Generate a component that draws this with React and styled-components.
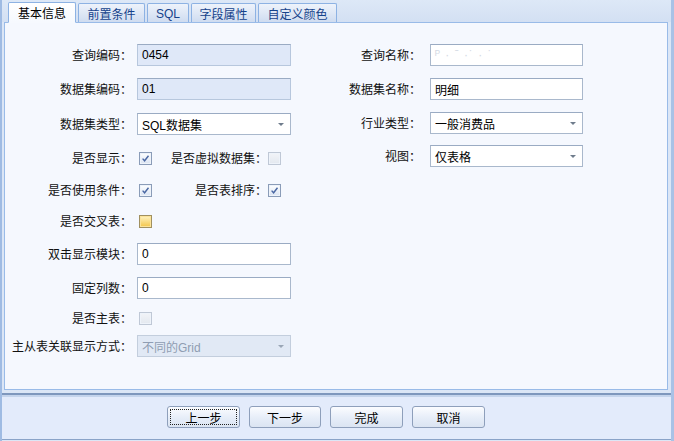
import React from 'react';
import styled, { createGlobalStyle } from 'styled-components';

const Global = createGlobalStyle`
  html, body { margin: 0; padding: 0; background: #ffffff; }
  body { font-family: "Liberation Sans", "Noto Sans CJK SC", sans-serif; font-size: 12px; color: #000; }
  * { box-sizing: border-box; }
`;

const Frame = styled.div`
  width: 674px;
  height: 441px;
  background: #dbe6f6;
  border-left: 2px solid #9fbbe3;
  border-right: 3px solid #a9c2e6;
  display: flex;
  flex-direction: column;
`;

const TabStrip = styled.div`
  height: 22px;
  display: flex;
  align-items: flex-end;
  gap: 2px;
  padding-left: 6px;
  background: linear-gradient(#dde8f7, #d3e0f3);
`;

const Tab = styled.div`
  height: ${p => (p.$active ? '21px' : '19px')};
  width: ${p => p.$w}px;
  border: 1px solid #8db2e3;
  border-bottom: ${p => (p.$active ? '1px solid #f6f9fe' : '0')};
  border-radius: 2px 2px 0 0;
  margin-bottom: ${p => (p.$active ? '-1px' : '0')};
  position: relative;
  z-index: ${p => (p.$active ? 2 : 1)};
  background: ${p => (p.$active ? 'linear-gradient(#ffffff, #f6f9fe)' : 'linear-gradient(#eef3fb, #cfdcf0)')};
  color: ${p => (p.$active ? '#000' : '#15428b')};
  font-family: "Liberation Sans", "Noto Sans CJK SC", sans-serif;
  font-size: 12px;
  display: flex;
  align-items: center;
  justify-content: center;
  padding-top: ${p => (p.$active ? '0' : '1px')};
`;

const Body = styled.div`
  height: 368px;
  margin: 0 3px 0 2px;
  border: 1px solid #99bbe8;
  background: #f5f8fe;
  display: flex;
  padding-top: 21px;
  position: relative;
  z-index: 1;
`;

const Column = styled.div`
  width: ${p => p.$w}px;
  display: flex;
  flex-direction: column;
`;

const Row = styled.div`
  height: 22px;
  margin-top: ${p => p.$mt || 0}px;
  display: flex;
  align-items: center;
`;

const Label = styled.div`
  width: ${p => p.$w}px;
  text-align: right;
  white-space: nowrap;
  font-family: "Noto Sans CJK SC", sans-serif;
  font-size: 12px;
  color: #111;
  margin-right: ${p => p.$gap}px;
  line-height: 22px;
`;

const TextBox = styled.div`
  width: ${p => p.$w}px;
  height: ${p => p.$h || 22}px;
  border: 1px solid ${p => (p.$disabled ? '#c3cedd' : p.$readonly ? '#b7c7dd' : '#a9b8cc')};
  border-top-color: ${p => (p.$disabled ? '#c3cedd' : '#9aabc3')};
  background: ${p => (p.$disabled ? '#e1e9f5' : p.$readonly ? '#dfe8f8' : '#ffffff')};
  color: ${p => (p.$disabled ? '#8f9db2' : '#000')};
  font-family: "Liberation Sans", "Noto Sans CJK SC", sans-serif;
  font-size: 12px;
  padding-left: 4px;
  display: flex;
  align-items: center;
  position: relative;
  white-space: nowrap;
`;

const Arrow = styled.span`
  position: absolute;
  right: 6px;
  top: 9px;
  width: 0;
  height: 0;
  border-left: 3px solid transparent;
  border-right: 3px solid transparent;
  border-top: 3px solid ${p => (p.$disabled ? '#9aa6b6' : '#6f7c8c')};
`;

const Box = styled.span`
  width: 13px;
  height: 13px;
  margin-left: ${p => p.$ml || 0}px;
  border: 1px solid ${p => (p.$disabled ? '#bfc8d6' : p.$focus ? '#a09060' : '#8a9cb8')};
  background: ${p =>
    p.$disabled
      ? 'linear-gradient(#f2f4f8, #e3e8ef)'
      : p.$focus
      ? 'linear-gradient(#fff4c4, #f3c548)'
      : 'linear-gradient(#ffffff, #d9e3f2)'};
  display: inline-flex;
  align-items: center;
  justify-content: center;
  box-shadow: inset 0 0 0 1px ${p => (p.$focus ? '#fbe39a' : '#eef3fa')};
`;

const Faint = styled.span`
  color: #d4dae4;
  letter-spacing: 1px;
`;

const Separator = styled.div`
  height: 4px;
  margin: 3px 0 0 0;
  border-top: 2px solid #7e97bd;
  background: #c4d4ec;
`;

const ButtonBar = styled.div`
  height: 43px;
  background: #e3ebfb;
  border-bottom: 1px solid #8aa3c8;
  display: flex;
  align-items: center;
  gap: 9px;
  padding-left: 165px;
  padding-bottom: 2px;
`;

const Button = styled.button`
  width: ${p => p.$w}px;
  height: 22px;
  border: 1px solid #8e9fbb;
  border-radius: 3px;
  background: linear-gradient(#fbfcff, #e6edf8 55%, #dbe4f2);
  font-family: "Noto Sans CJK SC", sans-serif;
  font-size: 12px;
  color: #000;
  padding: 0;
  display: flex;
  align-items: center;
  justify-content: center;
  position: relative;
  &::after {
    content: '';
    display: ${p => (p.$focus ? 'block' : 'none')};
    position: absolute;
    inset: 2px;
    border: 1px dotted #222;
  }
`;

const Check = ({ checked, disabled, focus, ml }) => (
  <Box $disabled={disabled} $focus={focus} $ml={ml}>
    {checked && (
      <svg width="9" height="9" viewBox="0 0 9 9">
        <path d="M1.6 4.6 L3.6 6.8 L7.5 1.8" fill="none" stroke="#4a67a3" strokeWidth="1.4" />
      </svg>
    )}
  </Box>
);

const Combo = ({ w, children, disabled }) => (
  <TextBox $w={w} $disabled={disabled}>
    {children}
    <Arrow $disabled={disabled} />
  </TextBox>
);

export default function App() {
  return (
    <>
      <Global />
      <Frame>
        <TabStrip>
          <Tab $active $w={68}>基本信息</Tab>
          <Tab $w={67}>前置条件</Tab>
          <Tab $w={42}>SQL</Tab>
          <Tab $w={65}>字段属性</Tab>
          <Tab $w={79}>自定义颜色</Tab>
        </TabStrip>
        <Body>
          <Column $w={295}>
            <Row>
              <Label $w={127} $gap={5}>查询编码：</Label>
              <TextBox $w={154} $readonly>0454</TextBox>
            </Row>
            <Row $mt={12}>
              <Label $w={127} $gap={5}>数据集编码：</Label>
              <TextBox $w={154} $readonly>01</TextBox>
            </Row>
            <Row $mt={13}>
              <Label $w={127} $gap={5}>数据集类型：</Label>
              <Combo w={154}>SQL数据集</Combo>
            </Row>
            <Row $mt={12}>
              <Label $w={127} $gap={7}>是否显示：</Label>
              <Check checked />
              <Label $w={115} $gap={1}>是否虚拟数据集：</Label>
              <Check disabled />
            </Row>
            <Row $mt={10}>
              <Label $w={127} $gap={7}>是否使用条件：</Label>
              <Check checked />
              <Label $w={115} $gap={1}>是否表排序：</Label>
              <Check checked />
            </Row>
            <Row $mt={9}>
              <Label $w={127} $gap={7}>是否交叉表：</Label>
              <Check focus />
            </Row>
            <Row $mt={11}>
              <Label $w={127} $gap={5}>双击显示模块：</Label>
              <TextBox $w={154}>0</TextBox>
            </Row>
            <Row $mt={12}>
              <Label $w={127} $gap={5}>固定列数：</Label>
              <TextBox $w={154}>0</TextBox>
            </Row>
            <Row $mt={8}>
              <Label $w={127} $gap={7}>是否主表：</Label>
              <Check disabled />
            </Row>
            <Row $mt={6}>
              <Label $w={127} $gap={5}>主从表关联显示方式：</Label>
              <Combo w={154} disabled>不同的Grid</Combo>
            </Row>
          </Column>
          <Column $w={300}>
            <Row>
              <Label $w={121} $gap={9}>查询名称：</Label>
              <TextBox $w={153}>
                <Faint>ᴾ ·  ˉ  ·˙   ·      ˙</Faint>
              </TextBox>
            </Row>
            <Row $mt={12}>
              <Label $w={121} $gap={9}>数据集名称：</Label>
              <TextBox $w={153}>明细</TextBox>
            </Row>
            <Row $mt={12}>
              <Label $w={121} $gap={9}>行业类型：</Label>
              <Combo w={153}>一般消费品</Combo>
            </Row>
            <Row $mt={11}>
              <Label $w={121} $gap={9}>视图：</Label>
              <Combo w={153}>仅表格</Combo>
            </Row>
          </Column>
        </Body>
        <Separator />
        <ButtonBar>
          <Button $w={73} $focus>上一步</Button>
          <Button $w={72}>下一步</Button>
          <Button $w={73}>完成</Button>
          <Button $w={73}>取消</Button>
        </ButtonBar>
      </Frame>
    </>
  );
}
